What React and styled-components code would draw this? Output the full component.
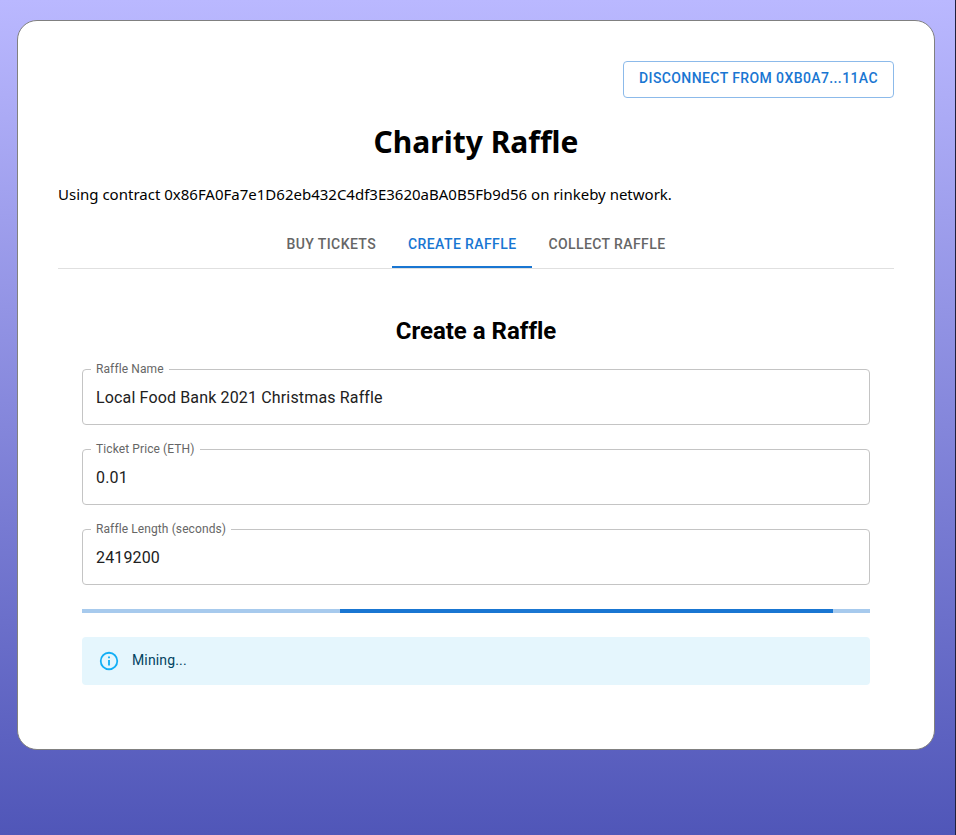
import React from "react";
import styled, { createGlobalStyle } from "styled-components";

const GlobalStyle = createGlobalStyle`
  *, *::before, *::after { box-sizing: border-box; }
  body {
    margin: 0;
    font-family: "Noto Sans", "Open Sans", sans-serif;
    font-variant-ligatures: none;
    color: #000;
  }
`;

const Page = styled.div`
  min-height: 100vh;
  padding: 20px 20px 20px 17px;
  border-right: 1px solid #20203c;
  background: linear-gradient(#bab8ff, #5056b8);
`;

const Card = styled.main`
  display: flex;
  flex-direction: column;
  padding: 40px;
  border: 1px solid #808080;
  border-radius: 20px;
  background: #fff;
`;

const Toolbar = styled.header`
  display: flex;
  justify-content: flex-end;
`;

const OutlinedButton = styled.button`
  height: 37px;
  padding: 0 15px 3px;
  border: 1px solid #8cbaea;
  border-radius: 4px;
  background: transparent;
  color: #1976d2;
  font: 500 14px/24px Roboto, sans-serif;
  letter-spacing: 0.4px;
  text-transform: uppercase;
  cursor: pointer;
`;

const Title = styled.h1`
  margin: 22px 0 19px;
  font-size: 30px;
  line-height: 44px;
  font-weight: 700;
  text-align: center;
`;

const Contract = styled.p`
  margin: 0;
  font-size: 15px;
  line-height: 22px;
`;

const TabList = styled.nav`
  display: flex;
  justify-content: center;
  margin-top: 15px;
  border-bottom: 1px solid #e0e0e0;
`;

const Tab = styled.button`
  height: 48px;
  padding: 2px 16px 0;
  border: 0;
  border-bottom: 2px solid ${(p) => (p.$active ? "#1976d2" : "transparent")};
  background: transparent;
  color: ${(p) => (p.$active ? "#1976d2" : "#666")};
  font: 500 14px/18px Roboto, sans-serif;
  letter-spacing: 0.4px;
  text-transform: uppercase;
  cursor: pointer;
`;

const Panel = styled.form`
  display: flex;
  flex-direction: column;
  gap: 24px;
  padding: 48px 24px 24px;
  font-family: Roboto, sans-serif;
`;

const PanelTitle = styled.h2`
  margin: 0;
  font-size: 24px;
  line-height: 28px;
  font-weight: 700;
  text-align: center;
`;

const Field = styled.fieldset`
  height: 62px;
  min-width: 0;
  margin: -6px 0 0;
  padding: 0 8px;
  border: 1px solid #c4c4c4;
  border-radius: 4px;
`;

const FieldLabel = styled.legend`
  padding: 0 5px;
  color: #666;
  font-size: 12px;
  line-height: 12px;
  letter-spacing: 0.1px;
`;

const TextInput = styled.input`
  display: block;
  width: 100%;
  height: 44px;
  padding: 0 5px;
  border: 0;
  outline: 0;
  background: transparent;
  color: #212121;
  font: 400 16px/23px Roboto, sans-serif;
  letter-spacing: 0.15px;
`;

const Progress = styled.div`
  display: grid;
  grid-template-columns: 258fr 493fr 37fr;
  height: 4px;
  background: #a7caed;
`;

const ProgressBar = styled.div`
  grid-column: 2;
  background: #1976d2;
`;

const Alert = styled.div`
  display: flex;
  align-items: center;
  gap: 12px;
  height: 48px;
  padding: 0 16px;
  border-radius: 4px;
  background: #e5f6fd;
  color: #014361;
  font-size: 14px;
  line-height: 20px;
  letter-spacing: 0.15px;
`;

const AlertMessage = styled.span`
  padding-bottom: 2px;
`;

const InfoIcon = styled.svg`
  width: 22px;
  height: 22px;
  fill: #12aef5;
`;

const tabs = ["Buy Tickets", "Create Raffle", "Collect Raffle"];

const fields = [
  { id: "name", label: "Raffle Name", value: "Local Food Bank 2021 Christmas Raffle" },
  { id: "price", label: "Ticket Price (ETH)", value: "0.01" },
  { id: "length", label: "Raffle Length (seconds)", value: "2419200" },
];

export default function App() {
  return (
    <>
      <GlobalStyle />
      <Page>
        <Card>
          <Toolbar>
            <OutlinedButton type="button">Disconnect from 0xb0a7...11ac</OutlinedButton>
          </Toolbar>
          <Title>Charity Raffle</Title>
          <Contract>
            Using contract 0x86FA0Fa7e1D62eb432C4df3E3620aBA0B5Fb9d56 on rinkeby network.
          </Contract>
          <TabList role="tablist">
            {tabs.map((tab) => (
              <Tab key={tab} type="button" role="tab" aria-selected={tab === "Create Raffle"} $active={tab === "Create Raffle"}>
                {tab}
              </Tab>
            ))}
          </TabList>
          <Panel>
            <PanelTitle>Create a Raffle</PanelTitle>
            {fields.map((field) => (
              <Field key={field.id}>
                <FieldLabel>
                  <label htmlFor={field.id}>{field.label}</label>
                </FieldLabel>
                <TextInput id={field.id} type="text" defaultValue={field.value} />
              </Field>
            ))}
            <Progress role="progressbar" aria-label="Mining">
              <ProgressBar />
            </Progress>
            <Alert role="status">
              <InfoIcon viewBox="0 0 24 24" aria-hidden="true">
                <path d="M11,9H13V7H11M12,20C7.59,20 4,16.41 4,12C4,7.59 7.59,4 12,4C16.41,4 20,7.59 20,12C20,16.41 16.41,20 12,20M12,2A10,10 0 0,0 2,12A10,10 0 0,0 12,22A10,10 0 0,0 22,12A10,10 0 0,0 12,2M11,17H13V11H11V17Z" />
              </InfoIcon>
              <AlertMessage>Mining...</AlertMessage>
            </Alert>
          </Panel>
        </Card>
      </Page>
    </>
  );
}
